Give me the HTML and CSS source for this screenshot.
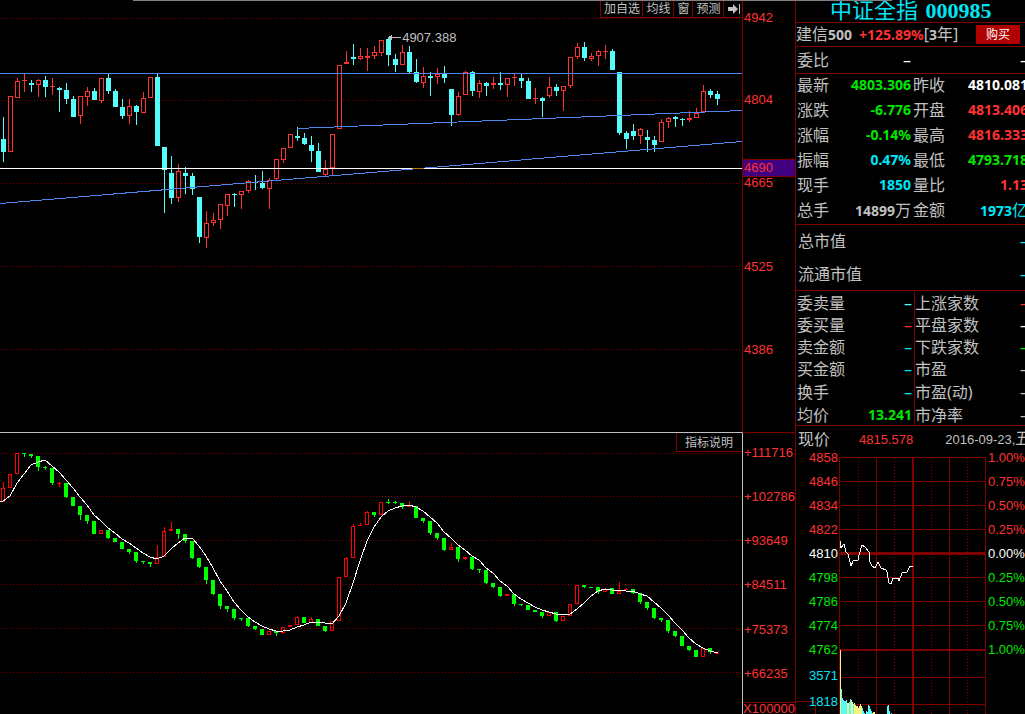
FILE: index.html
```html
<!DOCTYPE html>
<html lang="zh-CN">
<head>
<meta charset="utf-8">
<title>中证全指 000985</title>
<link rel="stylesheet" href="styles.css">
</head>
<body>
<div class="topline"></div>
<main class="app">
  <section class="chart price-chart">
    <svg class="plot" viewBox="0 0 742 432" preserveAspectRatio="none" aria-label="K线图">
      <g class="dots">
        <path d="M1 18.5H742M1 100.5H742M1 183.5H742M1 266.5H742M1 349.5H742"/>
      </g>
      <g id="candles"></g>
      <path class="trend" d="M0 73.5H742M0 203.5L742 141.5M297 128.5L742 110.5"/>
      <path class="cursor" d="M0 168.5H742"/>
      <path class="cursor-cross" d="M412 168.5H424"/>
      <path class="pointer" d="M388 37.5H401M391.5 35V40M390.5 35.5V40M389.5 36V39"/>
    </svg>
    <span class="peak">4907.388</span>
    <nav class="tools">
      <button>加自选</button><button>均线</button><button>窗</button><button>预测</button><button aria-label="最新"><svg class="jump" viewBox="0 0 12 12" width="12" height="12"><path d="M0 4H5V1L10 6L5 11V8H0ZM11 1H12V11H11Z"/></svg></button>
    </nav>
  </section>
  <aside class="axis price-axis">
    <span>4942</span><span>4804</span><span>4665</span><span>4525</span><span>4386</span>
    <strong class="cursor-value">4690</strong>
  </aside>

  <section class="chart index-chart">
    <svg class="plot" viewBox="0 433 742 281" preserveAspectRatio="none" aria-label="指标图">
      <g class="dots">
        <path d="M1 453.5H742M1 496.5H742M1 540.5H742M1 584.5H742M1 628.5H742M1 672.5H742"/>
      </g>
      <g id="bars"></g>
      <polyline class="average" points="0,501.5 3,501 10,496 17,483 24,474 31,465 38,462 45,460 52,466 59,472 66,480 73,488 80,497 87,505 94,515 101,521 108,528 115,533 122,539 129,543 136,548 143,553 150,557 157,559 164,556 171,549 178,543 185,538 192,538 199,546 206,556 213,568 220,581 227,591 234,602 241,610 248,617 255,622 262,626 269,629 276,631 283,631 290,630 297,627 304,625 311,622 318,622 325,623 332,624 339,616 346,603 353,583 360,561 367,541 374,527 381,517 388,511 395,508 402,506 409,505 416,507 423,511 430,517 437,523 444,532 451,538 458,545 465,550 472,556 479,560 486,568 493,573 500,581 507,586 514,594 521,599 528,603 535,607 542,610 549,612 556,614 563,615 570,614 577,609 584,603 591,596 598,591 605,589 612,590 626,591 633,591 640,594 647,596 654,602 661,608 668,615 675,623 682,630 689,638 696,644 703,648 710,651 718,653"/>
    </svg>
    <button class="explain">指标说明</button>
  </section>
  <aside class="axis index-axis">
    <span>+111716</span><span>+102786</span><span>+93649</span><span>+84511</span><span>+75373</span><span>+66235</span>
    <span class="unit">X100000</span>
  </aside>

  <section class="side">
    <h1>中证全指 <b>000985</b></h1>
    <div class="fund">
      <span>建信<b>500</b></span><b class="up">+125.89%</b><span>[<b>3</b>年]</span>
      <button>购买</button>
    </div>
    <table class="ratio"><tr><th>委比</th><td class="white">–</td><th></th><td class="white">–</td></tr></table>
    <table class="quotes">
      <tr><th>最新</th><td class="down">4803.306</td><th>昨收</th><td class="white">4810.081</td></tr>
      <tr><th>涨跌</th><td class="down">-6.776</td><th>开盘</th><td class="up">4813.406</td></tr>
      <tr><th>涨幅</th><td class="down">-0.14%</td><th>最高</th><td class="up">4816.333</td></tr>
      <tr><th>振幅</th><td class="cyan">0.47%</td><th>最低</th><td class="down">4793.718</td></tr>
      <tr><th>现手</th><td class="cyan">1850</td><th>量比</th><td class="up">1.13</td></tr>
      <tr><th>总手</th><td>14899<i>万</i></td><th>金额</th><td class="cyan">1973<i>亿</i></td></tr>
    </table>
    <table class="values">
      <tr><th>总市值</th><td class="cyan">–</td></tr>
      <tr><th>流通市值</th><td class="cyan">–</td></tr>
    </table>
    <table class="depth">
      <tr><th>委卖量</th><td class="aqua">–</td><th>上涨家数</th><td class="up">–</td></tr>
      <tr><th>委买量</th><td class="up">–</td><th>平盘家数</th><td class="white">–</td></tr>
      <tr><th>卖金额</th><td class="cyan">–</td><th>下跌家数</th><td class="down">–</td></tr>
      <tr><th>买金额</th><td class="cyan">–</td><th>市盈</th><td>–</td></tr>
      <tr><th>换手</th><td class="cyan">–</td><th>市盈(动)</th><td>–</td></tr>
      <tr><th>均价</th><td class="down">13.241</td><th>市净率</th><td>–</td></tr>
    </table>
    <div class="now"><span class="name">现价</span><span class="up">4815.578</span><time datetime="2016-09-23">2016-09-23,<i>五</i></time></div>
    <div class="intraday">
      <div class="scale left">
        <span class="up">4858</span><span class="up">4846</span><span class="up">4834</span><span class="up">4822</span><span class="white">4810</span><span class="down">4798</span><span class="down">4786</span><span class="down">4774</span><span class="down gap">4762</span><span class="cyan gap">3571</span><span class="cyan">1818</span>
      </div>
      <svg class="mini" viewBox="839 456 148 258" preserveAspectRatio="xMinYMin slice" aria-label="分时图">
        <path class="grid" d="M839 457.5H986M839 481.5H986M839 505.5H986M839 529.5H986M839 577.5H986M839 601.5H986M839 625.5H986M839 677.5H986M839 704.5H986M839.5 457V714M876.5 457V714M949.5 457V714M985.5 457V714"/>
        <path class="grid thick" d="M839 650H986M913 457V714"/>
        <path class="grid zero" d="M839 553.5H986"/>
        <path class="grid dotted" d="M858.5 458V714M894.5 458V714M931.5 458V714M967.5 458V714"/>
        <g id="volume"></g>
        <polyline class="average" points="840,541 841,548 844,544 846,552 848,554 851,566 853,561 858,560 859,555 862,545 865,547 869,552 870,562 872,566 875,568 878,562 881,568 886,570 887,572 889,583 891,584 893,578 898,578 899,581 902,573 907,572 910,566 913,566"/>
      </svg>
      <div class="scale right">
        <span class="up">1.00%</span><span class="up">0.75%</span><span class="up">0.50%</span><span class="up">0.25%</span><span class="white">0.00%</span><span class="down">0.25%</span><span class="down">0.50%</span><span class="down">0.75%</span><span class="down">1.00%</span>
      </div>
    </div>
  </section>
</main>
<script src="chart.js"></script>
</body>
</html>
```
FILE: styles.css
```css
* { box-sizing: border-box; }

:root {
  --line: #800000;
  --text: #c0c0c0;
  --red: #ff3232;
  --sans: "Liberation Sans", "Noto Sans CJK SC", sans-serif;
  --quote: "Noto Sans", "Noto Sans CJK SC", sans-serif;
}

body {
  margin: 0;
  background: #000;
  color: var(--text);
  font: 13px/16px var(--sans);
  overflow: hidden;
}

button { font: 12px/15px var(--sans); color: var(--text); background: #000; border: 0; padding: 0; margin: 0; }
i { font-style: normal; }

.app {
  display: grid;
  grid-template-columns: minmax(0, 1fr) 54px 229px;
  grid-template-rows: minmax(0, 432fr) minmax(0, 282fr);
  height: 100vh;
}

.topline { position: absolute; z-index: 2; top: 0; left: 13%; right: 13%; height: 1px; background: #808080; }

.chart { position: relative; min-width: 0; }
.plot { display: block; width: 100%; height: 100%; shape-rendering: crispEdges; }
.index-chart { border-top: 1px solid var(--text); }

.dots path { stroke: var(--line); stroke-dasharray: 1 2; }
.hollow { fill: #000; stroke: var(--red); }
.wick-up { fill: var(--red); }
.solid { fill: #54fcfc; }
#bars .hollow { stroke: #f00; }
#bars .wick-up { fill: #f00; }
#bars .solid { fill: #0f0; }
.trend { stroke: #4a86ec; fill: none; }
.cursor { stroke: #fff; }
.cursor-cross { stroke: #b57913; }
.pointer { stroke: var(--text); }
.average { stroke: #fff; fill: none; }

.peak { position: absolute; left: 54.2%; top: 30px; }

.tools { position: absolute; top: 1px; right: 0; display: grid; grid-template-columns: 42px 31px 19px 31px 19px; height: 17px; border-bottom: 1px solid var(--line); }
.tools button { border-left: 1px solid var(--line); padding-left: 1px; white-space: nowrap; display: flex; align-items: center; justify-content: center; }
.jump { fill: var(--text); }

.explain { position: absolute; top: 0; right: 0; height: 19px; padding: 2px 9px 0 8px; border: solid var(--line); border-width: 0 0 1px 1px; }

.axis { position: relative; display: grid; color: var(--red); border: solid var(--line); border-width: 0 1px; padding-left: 1px; line-height: 22px; }
.price-axis { grid-template-rows: 82fr repeat(4, 83fr); padding-top: 7px; padding-bottom: 10px; }
.cursor-value { position: absolute; left: 0; right: 0; top: 159px; height: 18px; padding-left: 1px; background: #400080; border: solid var(--line); border-width: 1px 0; font-weight: 400; line-height: 16px; }
.index-axis { grid-template-rows: repeat(5, minmax(0, 44fr)) minmax(0, 39fr) minmax(0, 12fr); border-top-width: 1px; border-left-color: var(--text); padding-top: 9px; }
.unit { border-top: 1px solid var(--line); margin-left: -1px; line-height: 12px; }

.side { grid-column: 3; grid-row: 1 / 3; display: flex; flex-direction: column; min-height: 0; overflow: hidden; white-space: nowrap; }
.side > * { flex-shrink: 0; }

h1 { margin: 0; padding-left: 34px; height: 22px; font: 22px/21px "Liberation Serif", "Noto Sans CJK SC", serif; color: #00e6f6; }
h1 b { margin-left: 2px; }

.fund, table { border-top: 1px solid var(--line); }
.fund { display: flex; align-items: center; height: 24px; font: 16px/20px var(--quote); }
.fund b { font-size: 14px; }
.fund b.up { margin: 0 0 0 7px; }
.fund button { margin-left: auto; margin-right: 5px; width: 44px; height: 19px; padding-top: 1px; background: #b00000; color: #fff; }

table { border-collapse: separate; border-spacing: 0; table-layout: fixed; width: calc(100% + 3px); font: 16px/20px var(--quote); }
th, td { padding: 0; font-weight: 400; text-align: left; vertical-align: middle; }
td { text-align: right; }
th:nth-child(1) { padding-left: 1px; width: 52px; }
td:nth-child(2) { width: 63px; }
th:nth-child(3) { width: 50px; padding-left: 2px; }
.quotes td, .depth tr:last-child .down { font-size: 14px; font-weight: 700; }
.quotes th, .quotes td { padding-bottom: 3px; }
.depth th, .depth td { padding-top: 2px; }
.quotes i { font-size: 16px; font-weight: 400; }
.ratio tr { height: 26px; }
.quotes tr { height: 25px; }
.values { table-layout: auto; padding-left: 1px; }
.values tr { height: 32px; }
.values tr:nth-child(2) { height: 33px; }
.values td:nth-child(2) { width: auto; }
.depth { border-bottom: 1px solid var(--line); }
.depth tr { height: 22px; }
.depth tr:nth-child(5), .depth tr:nth-child(6) { height: 23px; }
.depth th:nth-child(3) { width: 66px; border-left: 1px solid var(--line); padding-left: 0; }
.depth td:nth-child(2) { width: 66px; padding-right: 2px; }

.up { color: var(--red); }
.down { color: #00e600; }
.cyan { color: #00e6f6; }
.aqua { color: #54fcfc; }
.white { color: #fff; }

.now { display: flex; align-items: center; height: 30px; padding: 0 0 3px 2px; }
.now > * { flex: none; }
.now .name { font-size: 16px; width: 61px; }
.now time { margin-left: 32px; }
.now i { font-size: 16px; }

.intraday { flex: 1 1 0; min-height: 0; display: grid; grid-template-columns: 43px 148px 1fr; grid-template-rows: minmax(0, 1fr); }
.scale { position: relative; display: flex; flex-direction: column; line-height: 24px; margin-top: -10px; }
.scale span { position: relative; }
.scale.left { text-align: right; padding-right: 1px; }
.scale.left::before { content: ""; position: absolute; left: 0; bottom: 0; width: 19px; height: 12px; border: solid var(--line); border-width: 1px 1px 0 0; }
.scale.left .gap { height: 28px; }
.scale.right { padding-left: 1px; }
.mini { display: block; width: 100%; height: 100%; shape-rendering: crispEdges; }
.grid { stroke: var(--line); fill: none; }
.thick { stroke-width: 2; }
.zero { stroke-width: 3; }
.dotted { stroke-dasharray: 1 2; }
.vol-y { fill: #f4f484; }
.vol-c { fill: #54fcfc; }
```
FILE: chart.js
```js
// Each entry: direction (r = rising, c = falling), high, body top, body bottom, low.
const price = `c 117 139 152 162,r 96 96 152 152,r 78 81 98 98,r 74 80 81 92,c 80 83 85 92,r 79 80 85 97,c 76 80 87 97,r 78 86 87 95,
c 87 88 90 112,c 83 90 99 104,c 96 99 117 117,r 96 96 116 124,r 87 91 97 106,c 88 91 100 100,r 78 78 101 103,c 74 78 91 94,
c 89 91 107 107,c 99 107 116 119,r 99 106 116 124,c 105 106 112 125,r 92 98 113 113,r 77 77 98 98,c 74 77 146 146,c 147 147 170 213,
c 156 173 198 204,r 164 171 198 202,c 167 173 176 194,c 173 176 189 195,c 197 197 237 243,r 211 223 238 248,r 213 220 223 226,
r 204 204 220 229,r 194 194 206 216,c 193 194 195 207,r 191 191 195 209,r 180 181 191 193,c 175 182 183 190,c 171 183 188 189,
r 178 180 189 209,r 159 159 179 180,r 148 148 160 163,r 134 134 148 148,c 127 136 138 141,c 133 138 144 145,c 136 145 151 162,
c 143 151 172 172,r 160 169 175 176,r 134 134 168 176,r 65 65 129 129,r 51 62 64 64,c 44 57 59 65,r 48 56 59 60,r 48 56 58 71,
r 46 52 56 59,r 40 40 53 56,c 37 39 55 66,c 54 59 65 72,r 45 52 65 65,c 46 52 72 73,c 59 72 82 83,r 67 76 83 88,c 72 76 78 96,
r 68 74 77 84,c 66 73 78 83,c 89 89 115 126,r 92 96 115 116,r 71 72 95 95,c 71 72 91 96,r 80 83 92 98,c 82 83 86 96,r 77 83 85 89,
c 72 83 85 90,r 78 78 85 97,r 74 77 78 86,c 74 78 81 88,c 78 81 99 99,r 88 98 99 104,c 97 98 101 117,r 77 87 96 98,c 84 87 91 96,
r 86 86 91 111,r 57 57 86 88,r 43 47 57 59,c 42 47 58 61,r 53 56 59 61,r 50 51 56 66,r 45 51 52 59,c 49 51 70 70,c 72 72 133 135,
c 131 133 139 149,c 124 131 136 140,r 128 129 136 144,c 130 137 140 152,c 136 140 145 152,r 119 122 142 142,r 117 118 122 128,
c 116 117 119 127,c 118 119 120 126,r 111 118 120 122,r 108 113 118 118,r 85 91 112 112,c 89 91 95 98,c 91 94 99 105`;

const index = `r 482 488 502 502,r 474 474 488 488,r 453 453 474 474,g 453 453 454 457,g 454 454 456 458,g 456 456 467 471,g 466 467 468 470,
g 468 468 483 485,r 482 483 484 487,g 483 483 497 498,g 497 497 506 506,g 506 506 515 520,g 515 515 521 524,g 521 521 534 534,
r 530 530 534 534,g 530 530 538 539,g 538 538 542 542,g 542 542 549 549,g 549 549 552 554,g 552 552 561 563,g 561 561 562 564,
g 562 562 564 567,r 545 557 564 564,r 527 531 557 557,r 522 529 531 531,g 529 529 534 539,g 534 534 541 543,g 541 541 558 559,
g 558 558 567 568,g 567 567 580 584,g 580 580 594 595,g 594 594 606 609,g 606 606 609 612,g 609 609 618 620,g 618 618 619 621,
g 618 618 626 627,g 626 626 629 630,g 629 629 635 635,r 631 631 635 635,g 631 631 633 636,r 627 627 633 633,r 625 625 627 627,
r 616 617 625 625,g 617 617 623 623,r 617 619 623 623,g 619 619 626 626,g 626 626 631 632,r 621 621 631 631,r 577 577 621 621,
r 557 558 577 577,r 524 526 558 558,r 523 525 526 526,r 511 512 525 525,g 512 512 515 517,r 502 502 515 515,g 499 502 503 504,
g 501 502 503 504,g 503 503 507 509,r 501 506 507 507,g 506 506 518 518,g 518 518 521 523,g 521 521 533 535,g 533 533 538 540,
g 538 538 550 551,r 543 547 550 550,g 547 547 559 562,r 557 557 559 560,g 557 557 569 570,g 569 569 570 573,g 570 570 583 584,
g 583 583 587 588,g 587 587 596 597,r 594 594 596 596,g 594 594 604 606,g 604 604 605 606,g 605 605 610 610,g 610 610 612 612,
g 612 612 616 618,r 612 612 616 616,g 612 612 621 622,r 616 616 621 621,r 604 604 616 616,r 585 585 604 604,g 585 585 587 588,
g 587 587 588 588,g 587 587 592 594,r 588 589 592 592,g 588 588 594 594,r 582 591 594 594,r 588 589 590 590,g 589 589 593 594,
g 593 593 602 604,g 602 602 608 610,g 608 608 618 619,g 618 618 620 622,g 620 620 631 633,g 631 631 636 637,g 636 636 646 646,
g 646 646 650 651,g 650 650 657 657,r 648 648 657 657,g 648 648 652 654,r 653 653 654 654`;

const volume = `650y 689c 698c 700c 701c 701c 700c 703y 703y 702c 699c 700y 702y 704c 703y 705y 706y 706y 708y 706y 704y 706y 708c 711c 713c 714c
711c 712c 705c 706c 709c 711c 713y 712y 712y 714c 714c 714c 714c 714c 714c 714c 714c 714c 714c 714c 714c 706c 705c 711c 714c 713c`;

function rect(cls, x, y, w, h) {
  return `<rect class="${cls}" x="${x}" y="${y}" width="${w}" height="${h}"/>`;
}

function drawCandles(id, data, width) {
  document.getElementById(id).innerHTML = data.split(",").map((entry, i) => {
    const [kind, high, top, bottom, low] = entry.trim().split(" ").map((v, n) => (n ? Number(v) : v));
    const x = 1 + 7 * i;
    const solid = kind !== "r" || bottom - top < 3;
    const fill = kind === "r" ? "wick-up" : "solid";
    const wick = rect(fill, x + 2, high, 1, low - high);
    const body = solid
      ? rect(fill, x, top, width, bottom - top)
      : rect("hollow", x + 0.5, top + 0.5, width - 1, bottom - top - 1);
    return wick + body;
  }).join("");
}

drawCandles("candles", price, 5);
drawCandles("bars", index, 4);
document.getElementById("volume").innerHTML = volume.split(/\s+/).map((v, i) => {
  const top = parseInt(v, 10);
  return rect(v.endsWith("y") ? "vol-y" : "vol-c", 840 + i, top, 1, 714 - top);
}).join("");
```
